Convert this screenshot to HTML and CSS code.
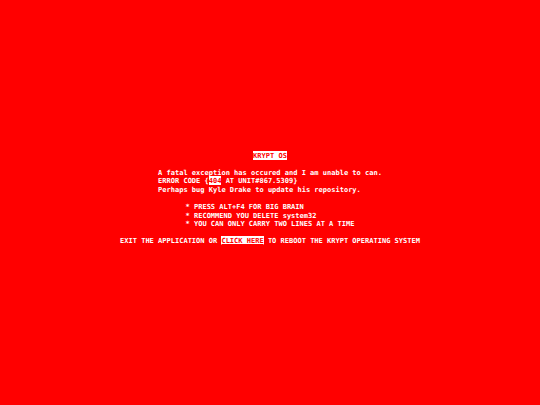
FILE: index.html
```html
<!DOCTYPE html>
<html lang="en">
<head>
<meta charset="utf-8">
<title>KRYPT OS</title>
<link rel="stylesheet" href="styles.css">
</head>
<body>
<main class="screen">
  <p class="title"><span class="inv">KRYPT OS</span></p>
  <div class="block">
    <p class="para">A fatal exception has occured and I am unable to can.<br>ERROR CODE {<span class="inv">404</span> AT UNIT#867.5309}<br>Perhaps bug Kyle Drake to update his repository.</p>
  </div>
  <ul class="list">
    <li>* PRESS ALT+F4 FOR BIG BRAIN</li>
    <li>* RECOMMEND YOU DELETE system32</li>
    <li>* YOU CAN ONLY CARRY TWO LINES AT A TIME</li>
  </ul>
  <p class="exit">EXIT THE APPLICATION OR <a class="inv link" href="#">CLICK HERE</a> TO REBOOT THE KRYPT OPERATING SYSTEM</p>
</main>
</body>
</html>
```

FILE: styles.css
```css
html, body {
  margin: 0;
  padding: 0;
  background: #ff0000;
}
body {
  width: 540px;
  height: 405px;
  overflow: hidden;
  color: #ffffff;
  font-family: "DejaVu Sans Mono", "Liberation Mono", monospace;
  font-weight: bold;
  font-size: 7.02px;
  line-height: 8.6px;
}
.screen {
  display: flex;
  flex-direction: column;
  align-items: center;
  padding-top: 151.5px;
}
p, ul {
  margin: 0 0 8.6px 0;
  padding: 0;
}
.title {
  text-align: center;
}
.list {
  list-style: none;
}
.inv {
  background: #ffffff;
  color: #ff0000;
  padding: 0;
}
.link {
  text-decoration: underline;
}
.exit {
  white-space: nowrap;
}
.para {
  white-space: nowrap;
}
```
